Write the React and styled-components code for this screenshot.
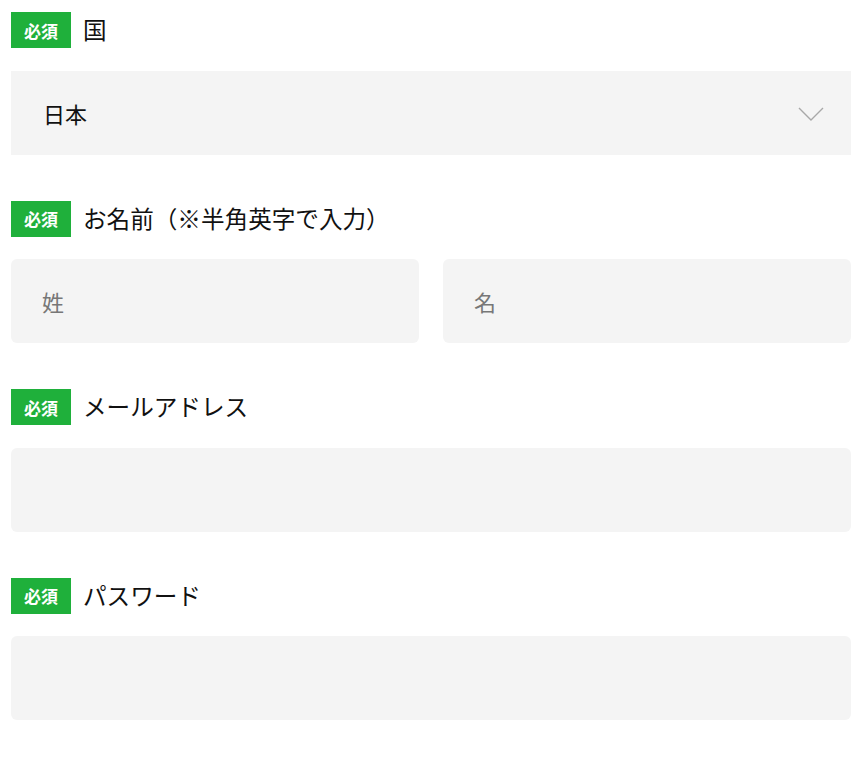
import React from "react";
import styled, { createGlobalStyle } from "styled-components";

const Global = createGlobalStyle`
  html, body { margin: 0; padding: 0; background: #fff; }
  body { font-family: "Noto Sans CJK JP", "Noto Sans", sans-serif; color: #111; }
  * { box-sizing: border-box; }
`;

const Form = styled.form`
  width: 867px;
  padding: 12px 16px 0 11px;
  display: flex;
  flex-direction: column;
  gap: 46px;
`;

const Field = styled.div`
  display: flex;
  flex-direction: column;
  gap: 22.5px;
`;

const LabelRow = styled.div`
  display: flex;
  align-items: center;
  gap: 12px;
  height: 36px;
`;

const Badge = styled.span`
  display: inline-flex;
  align-items: center;
  justify-content: center;
  width: 60px;
  height: 36px;
  background: #1fb03b;
  color: #fff;
  font-weight: 700;
  font-size: 17px;
`;

const LabelText = styled.span`
  font-size: 23.6px;
  font-weight: 400;
  line-height: 1;
  color: #111;
`;

const Row = styled.div`
  display: flex;
  gap: 24px;
`;

const Input = styled.input`
  flex: 1;
  min-width: 0;
  height: 84px;
  border: none;
  outline: none;
  background: #f4f4f4;
  border-radius: 6px;
  padding: 0 31px;
  font-family: inherit;
  font-size: 22px;
  color: #111;
  &::placeholder { color: #777; }
`;

const SelectBox = styled.div`
  position: relative;
  height: 84px;
  background: #f4f4f4;
  display: flex;
  align-items: center;
  padding: 0 32px;
  font-size: 22px;
  color: #111;
`;

const Chevron = styled.svg`
  position: absolute;
  right: 27px;
  top: 36px;
`;

function Label({ children }) {
  return (
    <LabelRow>
      <Badge>必須</Badge>
      <LabelText>{children}</LabelText>
    </LabelRow>
  );
}

export default function App() {
  return (
    <>
      <Global />
      <Form>
        <Field>
          <Label>国</Label>
          <SelectBox>
            日本
            <Chevron width="26" height="14" viewBox="0 0 26 14">
              <path d="M1 1 L13 13 L25 1" fill="none" stroke="#a8a8a8" strokeWidth="1.4" />
            </Chevron>
          </SelectBox>
        </Field>
        <Field>
          <Label>お名前（※半角英字で入力）</Label>
          <Row>
            <Input placeholder="姓" />
            <Input placeholder="名" />
          </Row>
        </Field>
        <Field>
          <Label>メールアドレス</Label>
          <Row>
            <Input type="email" />
          </Row>
        </Field>
        <Field>
          <Label>パスワード</Label>
          <Row>
            <Input type="password" />
          </Row>
        </Field>
      </Form>
    </>
  );
}
